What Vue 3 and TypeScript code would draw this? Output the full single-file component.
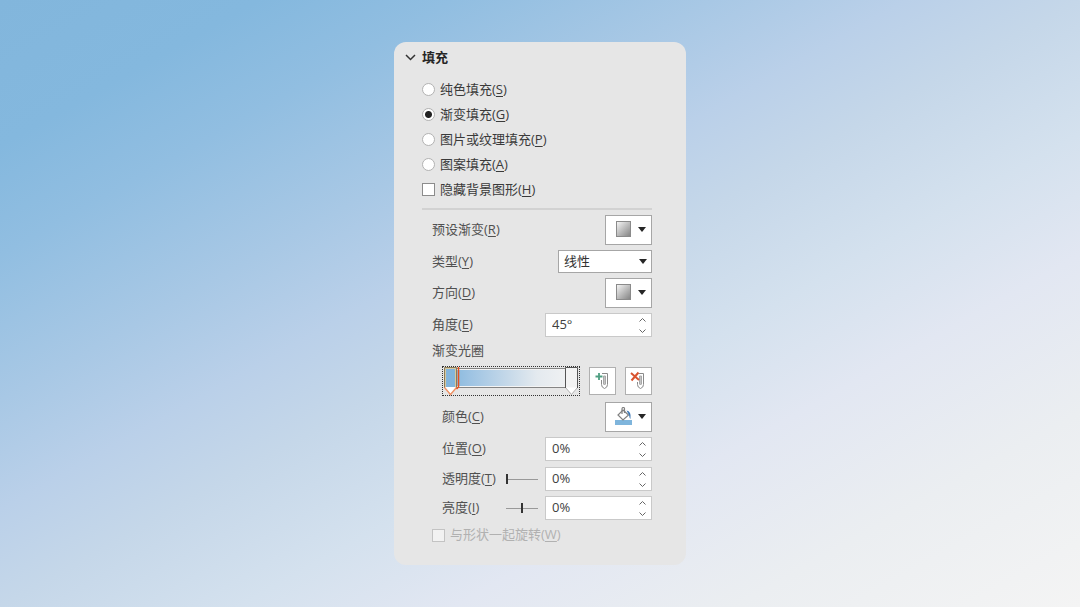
<script setup lang="ts">
import { ref } from 'vue'

interface FillOption {
  id: string
  text: string
  key: string
}

const fillOptions: FillOption[] = [
  { id: 'solid', text: '纯色填充', key: 'S' },
  { id: 'gradient', text: '渐变填充', key: 'G' },
  { id: 'picture', text: '图片或纹理填充', key: 'P' },
  { id: 'pattern', text: '图案填充', key: 'A' },
]

const fill = ref('gradient')
const hideBackground = ref(false)
const rotateWithShape = ref(false)
const gradientType = ref('linear')
const angle = ref(45)
const position = ref(0)
const transparency = ref(0)
const brightness = ref(0)
const open = ref(true)

function clamp(value: number, min: number, max: number): number {
  return Math.min(max, Math.max(min, value))
}
function readNumber(event: Event): number {
  return parseInt((event.target as HTMLInputElement).value, 10) || 0
}
</script>

<template>
  <main class="stage">
    <section class="panel" aria-label="填充">
      <button class="header" type="button" :aria-expanded="open" @click="open = !open">
        <svg width="12" height="12" viewBox="0 0 12 12" aria-hidden="true">
          <path d="M2 4l4.500 4.500L11 4" fill="none" stroke="#333" stroke-width="1.500" />
        </svg>
        <span>填充</span>
      </button>

      <div v-show="open" class="body">
        <div class="choices">
          <label v-for="o in fillOptions" :key="o.id" class="choice">
            <input v-model="fill" type="radio" name="fill" :value="o.id" />
            <span>{{ o.text }}(<u>{{ o.key }}</u>)</span>
          </label>
          <label class="choice">
            <input v-model="hideBackground" type="checkbox" />
            <span>隐藏背景图形(<u>H</u>)</span>
          </label>
        </div>

        <hr class="divider" />

        <div class="fields">
          <div class="row">
            <label for="preset">预设渐变(<u>R</u>)</label>
            <button id="preset" class="picker" type="button">
              <span class="swatch"></span>
              <svg class="caret" width="8" height="5" viewBox="0 0 8 5" aria-hidden="true"><path d="M0 0h8L4 5z" /></svg>
            </button>
          </div>
          <div class="row">
            <label for="type">类型(<u>Y</u>)</label>
            <div class="combo">
              <select id="type" v-model="gradientType">
                <option value="linear">线性</option>
              </select>
              <svg class="caret" width="8" height="5" viewBox="0 0 8 5" aria-hidden="true"><path d="M0 0h8L4 5z" /></svg>
            </div>
          </div>
          <div class="row">
            <label for="direction">方向(<u>D</u>)</label>
            <button id="direction" class="picker" type="button">
              <span class="swatch"></span>
              <svg class="caret" width="8" height="5" viewBox="0 0 8 5" aria-hidden="true"><path d="M0 0h8L4 5z" /></svg>
            </button>
          </div>
          <div class="row">
            <label for="angle">角度(<u>E</u>)</label>
            <div class="spin">
              <input id="angle" type="text" :value="angle + '°'" @change="angle = clamp(readNumber($event), 0, 359)" />
              <div class="steps">
                <button type="button" aria-label="增大角度" @click="angle = clamp(angle + 1, 0, 359)">
                  <svg width="7" height="4" viewBox="0 0 7 4"><path d="M.5 3.5l3-3 3 3" /></svg>
                </button>
                <button type="button" aria-label="减小角度" @click="angle = clamp(angle - 1, 0, 359)">
                  <svg width="7" height="4" viewBox="0 0 7 4"><path d="M.5.5l3 3 3-3" /></svg>
                </button>
              </div>
            </div>
          </div>
          <div class="caption">渐变光圈</div>

          <div class="row stops indent">
            <div class="track">
              <div class="bar"></div>
              <button class="stop first" type="button" aria-label="光圈 1">
                <svg width="18" height="29" viewBox="0 0 18 29" aria-hidden="true">
                  <path d="M1.500.5h12v21L7.500 27.500l-6-6z" fill="#fff" />
                  <path d="M2 1h11v19H2z" fill="#82b5dc" />
                  <path d="M2.500 20V1.500h10V20" fill="none" stroke="#d8c9a0" />
                  <path d="M1.500 21V.5h12V21" fill="none" stroke="#8b7b57" />
                  <path d="M1.500 20.500l6 7 6-7" fill="none" stroke="#ee9468" stroke-width="1.500" />
                  <path d="M15.500 0v20l-2 2" fill="none" stroke="#e8501d" stroke-width="1.500" />
                </svg>
              </button>
              <button class="stop last" type="button" aria-label="光圈 2">
                <svg width="15" height="29" viewBox="0 0 15 29" aria-hidden="true">
                  <path d="M1.500.5h12v20l-6 7-6-7z" fill="#f3f3f3" />
                  <path d="M2 20.500h11l-5.500 6z" fill="#fff" />
                  <path d="M1.500 20.500l6 7 6-7" fill="none" stroke="#b4b4b4" />
                  <path d="M1.500 21V.5h12V21" fill="none" stroke="#555" />
                </svg>
              </button>
            </div>
            <button class="tool" type="button" aria-label="添加渐变光圈">
              <svg width="20" height="20" viewBox="0 0 20 20" aria-hidden="true">
                <path d="M8.500 2.500h6v11q0 3-3 4-3-1-3-4z" fill="#fff" stroke="#8a8a8a" />
                <path d="M10.500 5h2v8l-1 1-1-1z" fill="#c4c4c4" stroke="#a8a8a8" />
                <path d="M2 1h7v8H2z" fill="#fff" />
                <path d="M6 2v7M2.500 5.500h7" stroke="#4f9f82" stroke-width="1.800" />
              </svg>
            </button>
            <button class="tool" type="button" aria-label="删除渐变光圈">
              <svg width="20" height="20" viewBox="0 0 20 20" aria-hidden="true">
                <path d="M8.500 2.500h6v11q0 3-3 4-3-1-3-4z" fill="#fff" stroke="#8a8a8a" />
                <path d="M10.500 5h2v8l-1 1-1-1z" fill="#c4c4c4" stroke="#a8a8a8" />
                <path d="M1 1h9v10H1z" fill="#fff" />
                <path d="M2 2l8 7M9.500 1.500 2.500 9.500" stroke="#d9532f" stroke-width="2" />
              </svg>
            </button>
          </div>

          <div class="row indent">
            <label for="color">颜色(<u>C</u>)</label>
            <button id="color" class="picker" type="button">
              <svg class="bucket" width="17" height="18" viewBox="0 0 17 18" aria-hidden="true">
                <path d="M0 13h17v5H0z" fill="#7fb5dc" />
                <path d="M8 3l5.500 5-5.500 5L3 8z" fill="#fff" stroke="#808080" stroke-width="1.200" />
                <path d="M7 7V2q0-1.500 1.300-1.500T9.500 2v4" fill="none" stroke="#808080" stroke-width="1.200" />
                <path d="M11.500 3.500q5 .5 4 8.500-1-.5-1.500-4z" fill="#3d78b5" />
              </svg>
              <svg class="caret" width="8" height="5" viewBox="0 0 8 5" aria-hidden="true"><path d="M0 0h8L4 5z" /></svg>
            </button>
          </div>
          <div class="row indent">
            <label for="position">位置(<u>O</u>)</label>
            <div class="spin">
              <input id="position" type="text" :value="position + '%'" @change="position = clamp(readNumber($event), 0, 100)" />
              <div class="steps">
                <button type="button" aria-label="增大位置" @click="position = clamp(position + 1, 0, 100)">
                  <svg width="7" height="4" viewBox="0 0 7 4"><path d="M.5 3.5l3-3 3 3" /></svg>
                </button>
                <button type="button" aria-label="减小位置" @click="position = clamp(position - 1, 0, 100)">
                  <svg width="7" height="4" viewBox="0 0 7 4"><path d="M.5.5l3 3 3-3" /></svg>
                </button>
              </div>
            </div>
          </div>
          <div class="sliders indent">
            <div class="row">
              <label for="transparency">透明度(<u>T</u>)</label>
              <input v-model.number="transparency" class="range" type="range" min="0" max="100" aria-label="透明度滑块" />
              <div class="spin">
                <input id="transparency" type="text" :value="transparency + '%'" @change="transparency = clamp(readNumber($event), 0, 100)" />
                <div class="steps">
                  <button type="button" aria-label="增大透明度" @click="transparency = clamp(transparency + 1, 0, 100)">
                    <svg width="7" height="4" viewBox="0 0 7 4"><path d="M.5 3.5l3-3 3 3" /></svg>
                  </button>
                  <button type="button" aria-label="减小透明度" @click="transparency = clamp(transparency - 1, 0, 100)">
                    <svg width="7" height="4" viewBox="0 0 7 4"><path d="M.5.5l3 3 3-3" /></svg>
                  </button>
                </div>
              </div>
            </div>
            <div class="row">
              <label for="brightness">亮度(<u>I</u>)</label>
              <input v-model.number="brightness" class="range" type="range" min="-100" max="100" aria-label="亮度滑块" />
              <div class="spin">
                <input id="brightness" type="text" :value="brightness + '%'" @change="brightness = clamp(readNumber($event), -100, 100)" />
                <div class="steps">
                  <button type="button" aria-label="增大亮度" @click="brightness = clamp(brightness + 1, -100, 100)">
                    <svg width="7" height="4" viewBox="0 0 7 4"><path d="M.5 3.5l3-3 3 3" /></svg>
                  </button>
                  <button type="button" aria-label="减小亮度" @click="brightness = clamp(brightness - 1, -100, 100)">
                    <svg width="7" height="4" viewBox="0 0 7 4"><path d="M.5.5l3 3 3-3" /></svg>
                  </button>
                </div>
              </div>
            </div>
          </div>
          <label class="choice disabled">
            <input v-model="rotateWithShape" type="checkbox" disabled />
            <span>与形状一起旋转(<u>W</u>)</span>
          </label>
        </div>
      </div>
    </section>
  </main>
</template>

<style>
body {
  margin: 0;
}
</style>

<style scoped>
* {
  box-sizing: border-box;
}
.stage {
  min-height: 100vh;
  display: flex;
  align-items: center;
  justify-content: center;
  background: linear-gradient(to bottom right, #82b6dc 0%, #84b8de 12%, #91bee1 21%, #a8c8e5 33%, #bad0e9 42%, #c5d7e9 50%, #d4e1ee 61%, #e2e7f2 71%, #ebeef1 84%, #f4f4f4 100%);
  font-family: "Open Sans", "Noto Sans CJK SC", sans-serif;
  font-size: 13px;
  line-height: 18px;
  color: #505050;
}
.panel {
  width: 292px;
  padding: 3px 34px 20px 10px;
  border-radius: 12px;
  background: #e6e6e6;
}
button,
input,
select {
  margin: 0;
  font: inherit;
  color: inherit;
}
button {
  padding: 0;
  border: 0;
  background: none;
}
.header {
  display: flex;
  align-items: center;
  gap: 6px;
  height: 24px;
  color: #262626;
  font-weight: 700;
}
.body {
  padding: 8px 0 0 18px;
}
.choice {
  display: flex;
  align-items: center;
  gap: 5px;
  height: 25px;
  color: #3a3a3a;
}
.choice span,
.row > label {
  padding-bottom: 2px;
}
u {
  text-underline-offset: 2px;
}
input[type="radio"],
input[type="checkbox"] {
  appearance: none;
  flex: none;
  width: 13px;
  height: 13px;
  border: 1px solid #b2b2b2;
  background: #fff;
}
input[type="radio"] {
  border-radius: 50%;
}
input[type="radio"]:checked {
  background: radial-gradient(circle, #222 0 3px, #fff 4px);
}
input[type="checkbox"] {
  border-color: #8c8c8c;
}
input[type="checkbox"]:checked {
  background: #555;
}
.divider {
  height: 2px;
  margin: 6px 0 5px;
  border: 0;
  background: #d2d2d2;
}
.fields {
  display: flex;
  flex-direction: column;
  gap: 5px;
  padding-left: 10px;
}
.row {
  display: flex;
  align-items: center;
}
.row > label {
  flex: 1;
}
.indent {
  padding-left: 10px;
}
.picker {
  display: flex;
  align-items: center;
  justify-content: space-between;
  width: 47px;
  height: 30px;
  padding: 0 5px 2px 10px;
  border: 1px solid #a6a6a6;
  background: #fff;
}
.swatch {
  width: 15px;
  height: 16px;
  border: 1px solid #8a8a8a;
  background: linear-gradient(135deg, #f4f4f4, #858585);
}
.caret {
  fill: #262626;
}
.bucket {
  margin-left: -1px;
}
.combo {
  position: relative;
  width: 94px;
}
.combo select {
  display: block;
  appearance: none;
  width: 100%;
  height: 23px;
  padding: 0 20px 2px 5px;
  border: 1px solid #a6a6a6;
  border-radius: 0;
  background: #fff;
  color: #333;
}
.combo .caret {
  position: absolute;
  top: 9px;
  right: 5px;
  pointer-events: none;
}
.spin {
  display: flex;
  width: 107px;
  height: 24px;
  border: 1px solid #c9c9c9;
  background: #fff;
  color: #404040;
}
.spin input {
  flex: 1;
  min-width: 0;
  padding: 0 6px 2px;
  border: 0;
  background: none;
}
.steps {
  display: flex;
  flex-direction: column;
  width: 17px;
}
.steps button {
  display: flex;
  flex: 1;
  align-items: center;
  justify-content: center;
}
.steps path {
  fill: none;
  stroke: #666;
}
.caption {
  height: 18px;
  line-height: 16px;
}
.stops {
  gap: 9px;
  height: 32px;
}
.track {
  position: relative;
  flex: 1;
  height: 30px;
  padding: 1px;
  border: 1px dotted #333;
}
.bar {
  height: 20px;
  padding: 1px;
  border: 1px solid #858585;
  background: linear-gradient(to right, #82b6dc, #9dc3e3 18%, #c6d9e9 48%, #e4eaef 70%, #f3f3f3) content-box, #f4f4f4;
}
.stop {
  position: absolute;
  top: 0;
  height: 29px;
}
.stop svg {
  display: block;
}
.first {
  left: 0;
}
.last {
  right: 0;
}
.tool {
  display: grid;
  place-items: center;
  width: 27px;
  height: 28px;
  border: 1px solid #b0b0b0;
  background: #fff;
}
.sliders {
  display: flex;
  flex-direction: column;
  gap: 5px;
  padding-top: 1px;
}
.range {
  appearance: none;
  width: 32px;
  height: 12px;
  margin-right: 7px;
  background: linear-gradient(#999, #999) center / 100% 1px no-repeat;
}
.range::-webkit-slider-thumb {
  appearance: none;
  width: 2px;
  height: 10px;
  background: #333;
}
.disabled {
  height: 20px;
  color: #b1b1b1;
}
.disabled input[type="checkbox"] {
  border-color: #c3c3c3;
  background: #f2f2f2;
}
</style>
